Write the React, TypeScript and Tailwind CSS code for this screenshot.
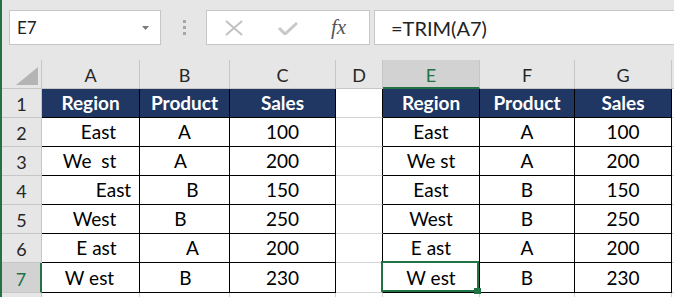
import React from "react";

const font = { fontFamily: "Lato, 'Open Sans', sans-serif" };

const leftRows: [string, string, string, string, string][] = [
  ["East", "pl-[16px]", "A", "", "100"],
  ["We  st", "pr-[2px]", "A", "pr-[8px]", "200"],
  ["East", "pl-[46px]", "B", "pl-[16px]", "150"],
  ["West", "pl-[8px]", "B", "pr-[8px]", "250"],
  ["E ast", "pl-[12px]", "A", "pl-[16px]", "200"],
  ["W est", "pr-[2px]", "B", "pl-[2px]", "230"],
];

const rightRows: [string, string, string][] = [
  ["East", "A", "100"],
  ["We st", "A", "200"],
  ["East", "B", "150"],
  ["West", "B", "250"],
  ["E ast", "A", "200"],
  ["W est", "B", "230"],
];

function ColHdr({ t, sel }: { t: string; sel?: boolean }) {
  return (
    <div
      className={
        sel
          ? "flex items-end justify-center pb-[3px] bg-[#d2d2d2] border-r border-r-[#c6c6c6] border-b-2 border-b-[#217346] text-[#217346] text-[18px] leading-[18px]"
          : "flex items-end justify-center pb-[4px] bg-[#e6e6e6] border-r border-b border-[#c6c6c6] text-[#262626] text-[18px] leading-[18px]"
      }
    >
      {t}
    </div>
  );
}

function RowHdr({ t, sel }: { t: string; sel?: boolean }) {
  return (
    <div
      className={
        sel
          ? "flex items-end justify-center pb-[4px] bg-[#d2d2d2] border-r-2 border-r-[#217346] border-b border-b-[#c6c6c6] text-[#217346] text-[18px] leading-[18px]"
          : "flex items-end justify-center pb-[4px] bg-[#e6e6e6] border-r border-b border-[#c6c6c6] text-[#262626] text-[18px] leading-[18px]"
      }
    >
      {t}
    </div>
  );
}

function Cell({ t, cls = "" }: { t: string; cls?: string }) {
  return (
    <div
      className={
        "flex items-end justify-center pb-[5px] whitespace-pre bg-white border-r border-b border-black text-black text-[19px] leading-[18px] " +
        cls
      }
    >
      {t}
    </div>
  );
}

function HeadCell({ t }: { t: string }) {
  return (
    <div className="flex items-end justify-center pb-[5px] bg-[#203764] border-r border-b border-black text-white font-bold text-[19px] leading-[18px]">
      {t}
    </div>
  );
}

function DCell() {
  return <div className="bg-white border-r border-r-black border-b border-b-[#d4d4d4]" />;
}

function Rest() {
  return <div className="bg-white border-b border-b-[#d4d4d4]" />;
}

function Row8() {
  return <div className="bg-white border-r border-r-[#d4d4d4]" />;
}

export default function App() {
  return (
    <div className="flex w-[674px] h-[297px] overflow-hidden bg-white" style={font}>
      <div className="w-[2px] shrink-0 bg-[#217346]" />
      <div className="flex-1 flex flex-col min-w-0">
        {/* toolbar */}
        <div className="h-[60px] shrink-0 bg-[#e6e6e6] flex items-start pt-[10px]">
          <div className="ml-[7px] w-[152px] h-[35px] bg-white border border-[#c6c6c6] flex items-center justify-between pl-[7px] pr-[11px]">
            <span className="text-[17px] text-[#222] leading-none">E7</span>
            <svg width="7" height="4" viewBox="0 0 7 4">
              <polygon points="0,0 7,0 3.5,4" fill="#7a7a7a" />
            </svg>
          </div>
          <div className="w-[45px] h-[35px] flex flex-col items-center justify-center gap-[3px] pl-[2px]">
            <div className="w-[3px] h-[3px] bg-[#a6a6a6]" />
            <div className="w-[3px] h-[3px] bg-[#a6a6a6]" />
            <div className="w-[3px] h-[3px] bg-[#a6a6a6]" />
          </div>
          <div className="w-[164px] h-[35px] bg-white border border-[#c6c6c6] flex items-center">
            <svg width="18" height="16" viewBox="0 0 18 16" className="ml-[18px]">
              <path d="M1 1 L17 15 M17 1 L1 15" stroke="#c2c2c2" strokeWidth="2" />
            </svg>
            <svg width="20" height="14" viewBox="0 0 20 14" className="ml-[35px]">
              <path d="M1 7 L7 13 L19 2" stroke="#c8c8c8" strokeWidth="3" fill="none" />
            </svg>
            <span
              className="ml-[33px] italic text-[21px] text-[#555] leading-none"
              style={{ fontFamily: "'Liberation Serif', serif" }}
            >
              fx
            </span>
          </div>
          <div className="ml-[4px] flex-1 h-[35px] bg-white border border-r-0 border-[#c6c6c6] flex items-center pl-[16px]">
            <span className="text-[20px] text-[#222] leading-none">=TRIM(A7)</span>
          </div>
        </div>

        {/* sheet */}
        <div className="relative flex-1 grid grid-cols-[40px_98px_90px_106px_47px_97px_95px_97px_1fr] grid-rows-[29px_29px_29px_29px_29px_29px_29px_30px_1fr]">
          <div className="relative bg-[#e6e6e6] border-r border-b border-[#c6c6c6]">
            <svg width="22" height="18" viewBox="0 0 22 18" className="absolute right-[3px] bottom-[3px]">
              <polygon points="22,0 22,18 0,18" fill="#b4b4b4" />
            </svg>
          </div>
          <ColHdr t="A" />
          <ColHdr t="B" />
          <ColHdr t="C" />
          <ColHdr t="D" />
          <ColHdr t="E" sel />
          <ColHdr t="F" />
          <ColHdr t="G" />
          <div className="bg-[#e6e6e6] border-b border-[#c6c6c6]" />

          <RowHdr t="1" />
          <HeadCell t="Region" />
          <HeadCell t="Product" />
          <HeadCell t="Sales" />
          <DCell />
          <HeadCell t="Region" />
          <HeadCell t="Product" />
          <HeadCell t="Sales" />
          <Rest />

          {leftRows.map((r, i) => (
            <React.Fragment key={i}>
              <RowHdr t={String(i + 2)} sel={i === 5} />
              <Cell t={r[0]} cls={r[1]} />
              <Cell t={r[2]} cls={r[3]} />
              <Cell t={r[4]} />
              <DCell />
              <Cell t={rightRows[i][0]} />
              <Cell t={rightRows[i][1]} />
              <Cell t={rightRows[i][2]} />
              <Rest />
            </React.Fragment>
          ))}

          <div className="bg-[#e6e6e6] border-r border-[#c6c6c6]" />
          <Row8 />
          <Row8 />
          <Row8 />
          <Row8 />
          <Row8 />
          <Row8 />
          <Row8 />
          <div className="bg-white" />

          <div className="absolute left-[379px] top-[201px] w-[98px] h-[31px] border-2 border-[#217346] pointer-events-none" />
          <div className="absolute left-[472px] top-[228px] w-[7px] h-[6px] bg-[#217346]" />
        </div>
      </div>
    </div>
  );
}
